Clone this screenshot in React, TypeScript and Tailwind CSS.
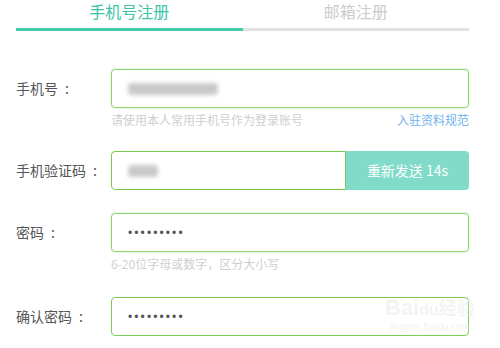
import React from "react";

const font = { fontFamily: '"Noto Sans CJK SC", "Noto Sans", sans-serif' };
const dotFont = { fontFamily: '"Liberation Sans", sans-serif' };

function Blur({ w }: { w: string }) {
  return (
    <div className={`h-[12px] ${w} rounded-sm bg-[#c9c9cc] blur-[2px]`} />
  );
}

function Label({ text }: { text: string }) {
  return (
    <div className="w-[95px] text-[14px] text-[#555] flex items-center">
      <span>{text}</span>
      <span className="ml-[7px]">:</span>
    </div>
  );
}

function Dots() {
  return (
    <span className="text-[12px] text-[#555] tracking-[2.1px]" style={dotFont}>
      •••••••••
    </span>
  );
}

export default function App() {
  return (
    <div className="w-[500px] h-[348px] bg-white overflow-hidden relative" style={font}>
      {/* Tabs */}
      <div className="mx-[16px] w-[453px] flex">
        <div className="flex-1 flex flex-col items-center">
          <div className="h-[29px] -mt-[1px] pb-[1px] text-[16px] leading-[24px] text-[#3cc4a6]">手机号注册</div>
          <div className="h-[3px] w-full bg-[#47c9ad]" />
        </div>
        <div className="flex-1 flex flex-col items-center">
          <div className="h-[29px] -mt-[1px] pb-[1px] text-[16px] leading-[24px] text-[#cccccc]">邮箱注册</div>
          <div className="h-[3px] w-full bg-[#e2e2e2]" />
        </div>
      </div>

      {/* Row 1 */}
      <div className="mt-[38px] flex items-center pl-[16px]">
        <Label text="手机号" />
        <div className="w-[358px] h-[39px] rounded-[4px] border-[1.5px] border-[#8fd56f] flex items-center pl-[16px] shadow-[0_0_2px_#b9e8a2]">
          <Blur w="w-[90px]" />
        </div>
      </div>
      <div className="pl-[111px] w-[469px] mt-[3px] flex justify-between text-[12px] leading-[18px]">
        <span className="text-[#cfcfcf]">请使用本人常用手机号作为登录账号</span>
        <span className="text-[#6fb3ee]">入驻资料规范</span>
      </div>

      {/* Row 2 */}
      <div className="mt-[22px] flex items-center pl-[16px]">
        <Label text="手机验证码" />
        <div className="w-[235px] h-[39px] rounded-l-[4px] border-[1.5px] border-[#79c94f] flex items-center pl-[16px]">
          <Blur w="w-[30px]" />
        </div>
        <div className="w-[123px] h-[39px] rounded-r-[4px] bg-[#80dbc8] text-white text-[14px] flex items-center justify-center">
          重新发送 14s
        </div>
      </div>

      {/* Row 3 */}
      <div className="mt-[23px] flex items-center pl-[16px]">
        <Label text="密码" />
        <div className="w-[358px] h-[39px] rounded-[4px] border-[1.5px] border-[#8fd56f] flex items-center pl-[16px] shadow-[0_0_2px_#b9e8a2]">
          <Dots />
        </div>
      </div>
      <div className="pl-[111px] mt-[3px] text-[12px] leading-[18px] text-[#cfcfcf]">6-20位字母或数字，区分大小写</div>

      {/* Row 4 */}
      <div className="mt-[24px] flex items-center pl-[16px]">
        <Label text="确认密码" />
        <div className="w-[358px] h-[39px] rounded-[4px] border-[1.5px] border-[#7dcc58] flex items-center pl-[16px]">
          <Dots />
        </div>
      </div>

      {/* watermark */}
      <div className="absolute left-[385px] top-[296px] flex flex-col items-center opacity-60 pointer-events-none">
        <div className="text-[22px] leading-[22px] font-bold text-[#ececec]" style={dotFont}>Bai<span className="text-[16px]">du</span><span className="text-[18px]" style={font}>经验</span></div>
        <div className="text-[10px] leading-[12px] text-[#e8e8e8]" style={dotFont}>jingyan.baidu.com</div>
      </div>
    </div>
  );
}
